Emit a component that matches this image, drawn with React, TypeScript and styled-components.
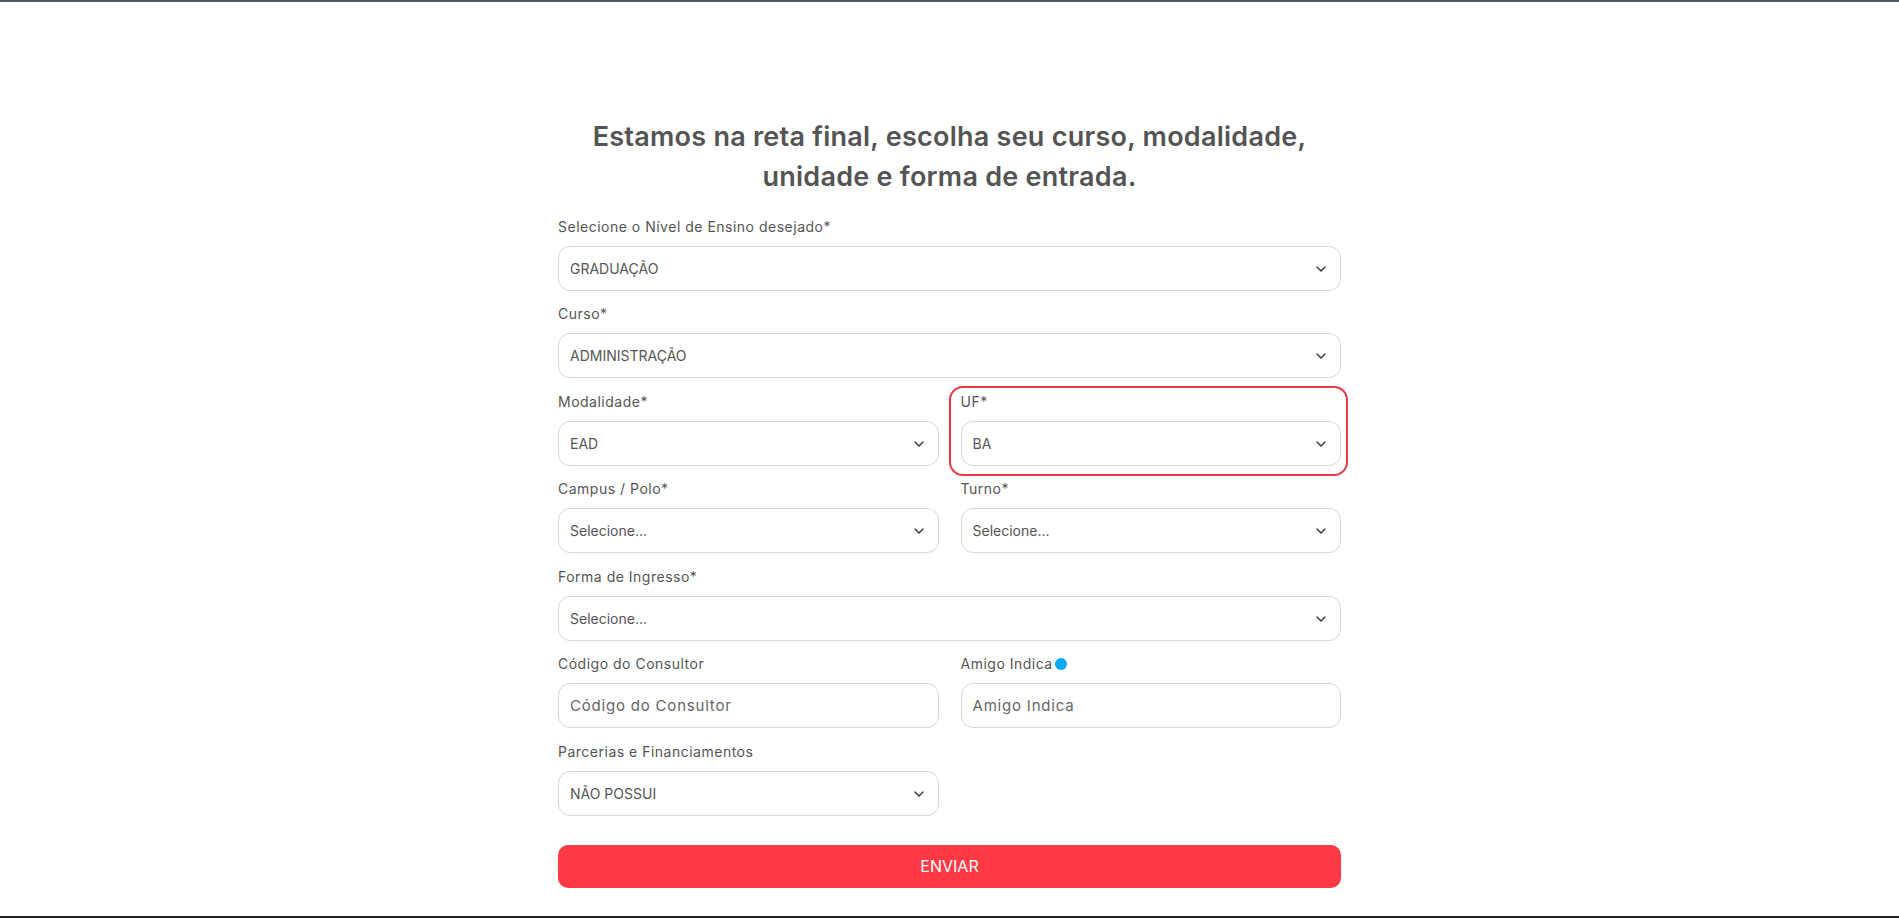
import styled, { createGlobalStyle } from "styled-components";

const GlobalStyle = createGlobalStyle`
  * {
    box-sizing: border-box;
  }
  html, body {
    margin: 0;
    padding: 0;
    background: #ffffff;
  }
  body {
    font-family: Inter, "Noto Sans", Arial, sans-serif;
    color: #555;
  }
`;

interface FieldProps {
  label: string;
  kind: "select" | "input";
  value?: string;
  placeholder?: string;
  wide?: boolean;
  highlight?: boolean;
  info?: boolean;
}

const fields: FieldProps[] = [
  {
    label: "Selecione o Nível de Ensino desejado*",
    kind: "select",
    value: "GRADUAÇÃO",
    wide: true,
  },
  { label: "Curso*", kind: "select", value: "ADMINISTRAÇÃO", wide: true },
  { label: "Modalidade*", kind: "select", value: "EAD" },
  { label: "UF*", kind: "select", value: "BA", highlight: true },
  { label: "Campus / Polo*", kind: "select", value: "Selecione..." },
  { label: "Turno*", kind: "select", value: "Selecione..." },
  {
    label: "Forma de Ingresso*",
    kind: "select",
    value: "Selecione...",
    wide: true,
  },
  {
    label: "Código do Consultor",
    kind: "input",
    placeholder: "Código do Consultor",
  },
  {
    label: "Amigo Indica",
    kind: "input",
    placeholder: "Amigo Indica",
    info: true,
  },
  {
    label: "Parcerias e Financiamentos",
    kind: "select",
    value: "NÃO POSSUI",
  },
];

const Chevron = () => (
  <ChevronIcon viewBox="0 0 10 6" width="10" height="6">
    <path
      d="M1 1l4 4 4-4"
      fill="none"
      stroke="#333"
      strokeWidth="1.4"
      strokeLinecap="round"
      strokeLinejoin="round"
    />
  </ChevronIcon>
);

const FormField: React.FC<FieldProps> = ({
  label,
  kind,
  value,
  placeholder,
  wide,
  highlight,
  info,
}) => (
  <Field $wide={wide} $highlight={highlight}>
    <Label>
      {label}
      {info && <InfoDot />}
    </Label>
    {kind === "select" ? (
      <SelectWrap>
        <Select defaultValue={value}>
          <option value={value}>{value}</option>
        </Select>
        <Chevron />
      </SelectWrap>
    ) : (
      <Input placeholder={placeholder} />
    )}
  </Field>
);

const App = () => {
  return (
    <>
      <GlobalStyle />
      <Page>
        <FormCard onSubmit={(e) => e.preventDefault()}>
          <Heading>
            Estamos na reta final, escolha seu curso, modalidade,
            <br />
            unidade e forma de entrada.
          </Heading>
          <Grid>
            {fields.map((f) => (
              <FormField key={f.label} {...f} />
            ))}
          </Grid>
          <SubmitButton type="submit">ENVIAR</SubmitButton>
        </FormCard>
      </Page>
    </>
  );
};

const Page = styled.div`
  min-height: 100vh;
  border-top: 2px solid #4b5b62;
  border-bottom: 2px solid #1f2224;
  display: flex;
  justify-content: center;
  padding-top: 115px;
`;

const FormCard = styled.form`
  width: 783px;
  display: flex;
  flex-direction: column;
`;

const Heading = styled.h1`
  margin: 0 0 19px;
  text-align: center;
  font-size: 27px;
  line-height: 40px;
  font-weight: 600;
  color: #545454;
  letter-spacing: 0.25px;
`;

const Grid = styled.div`
  display: grid;
  grid-template-columns: 1fr 1fr;
  column-gap: 22px;
`;

const Field = styled.div<{ $wide?: boolean; $highlight?: boolean }>`
  grid-column: ${(p) => (p.$wide ? "1 / -1" : "auto")};
  display: flex;
  flex-direction: column;
  margin-bottom: 13px;
  position: relative;

  ${(p) =>
    p.$highlight &&
    `
    &::after {
      content: "";
      position: absolute;
      top: -5px;
      left: -12px;
      right: -7px;
      bottom: -10px;
      border: 2.5px solid #e63a47;
      border-radius: 14px;
      pointer-events: none;
    }
  `}
`;

const Label = styled.label`
  display: flex;
  align-items: center;
  height: 20px;
  margin-bottom: 9.5px;
  font-size: 14px;
  letter-spacing: 0.5px;
  color: #555;
`;

const InfoDot = styled.span`
  width: 12px;
  height: 12px;
  border-radius: 50%;
  background: #03a9f4;
  margin-left: 2px;
`;

const SelectWrap = styled.div`
  position: relative;
`;

const Select = styled.select`
  width: 100%;
  height: 45px;
  appearance: none;
  border: 1px solid #d4d8da;
  border-radius: 12px;
  background: #fff;
  padding: 0 40px 0 11px;
  font-family: inherit;
  font-size: 14px;
  color: #555;
  outline: none;
`;

const ChevronIcon = styled.svg`
  position: absolute;
  right: 15px;
  top: 20px;
  pointer-events: none;
`;

const Input = styled.input`
  width: 100%;
  height: 45px;
  border: 1px solid #d4d8da;
  border-radius: 12px;
  background: #fff;
  padding: 0 11px;
  font-family: inherit;
  font-size: 15px;
  letter-spacing: 0.8px;
  color: #555;
  outline: none;

  &::placeholder {
    color: #666;
  }
`;

const SubmitButton = styled.button`
  margin-top: 16px;
  height: 43px;
  border: none;
  border-radius: 10px;
  background: #ff3a46;
  color: #fff;
  font-family: inherit;
  font-size: 16px;
  cursor: pointer;
`;

export default App;
